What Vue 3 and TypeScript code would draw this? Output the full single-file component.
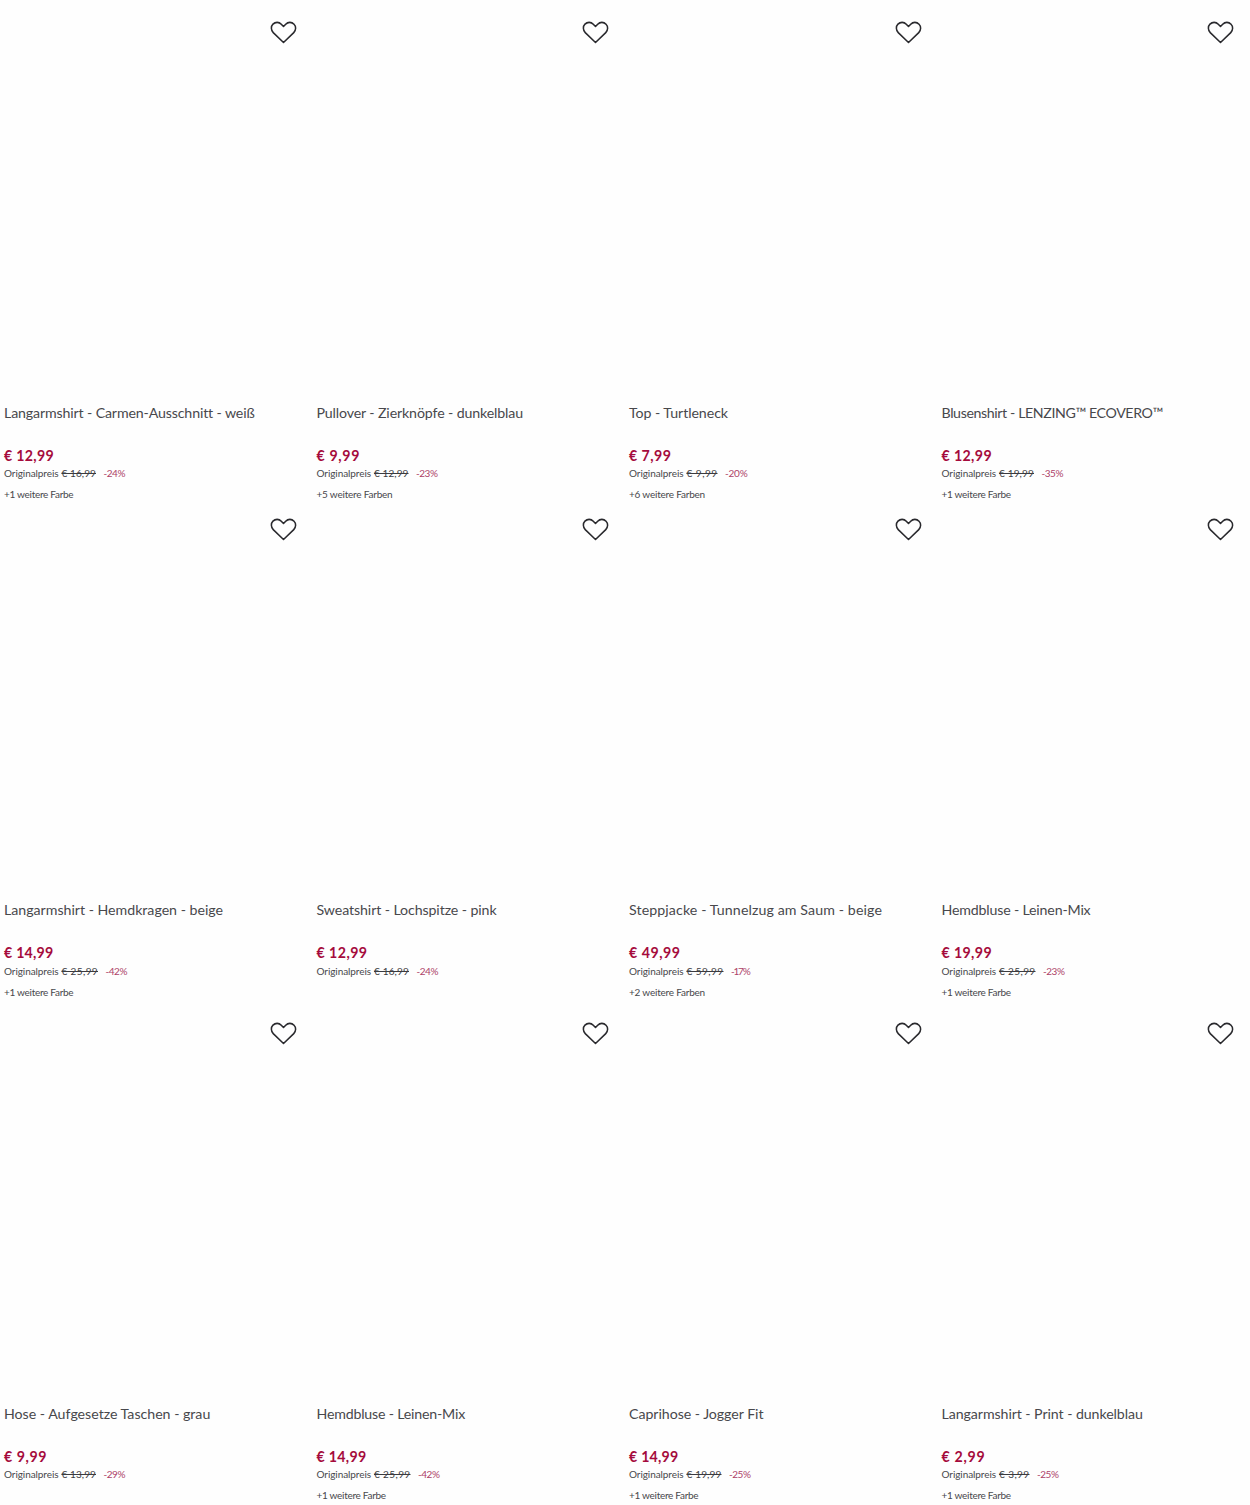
<script setup lang="ts">
interface Product {
  title: string
  titleWidth: number
  price: string
  priceWidth: number
  original: string
  originalWidth: number
  discount: string
  discountWidth: number
  colors?: number
}

const product = (
  title: string, titleWidth: number,
  price: string, priceWidth: number,
  original: string, originalWidth: number,
  discount: string, discountWidth: number,
  colors?: number,
): Product => ({ title, titleWidth, price, priceWidth, original, originalWidth, discount, discountWidth, colors })

const rows: Product[][] = [
  [
    product('Langarmshirt - Carmen-Ausschnitt - weiß', 250, '12,99', 50, '16,99', 34.5, '24', 21.5, 1),
    product('Pullover - Zierknöpfe - dunkelblau', 206.5, '9,99', 43.5, '12,99', 34.5, '23', 21.5, 5),
    product('Top - Turtleneck', 99, '7,99', 42.5, '9,99', 31, '20', 22.5, 6),
    product('Blusenshirt - LENZING™ ECOVERO™', 221.3, '12,99', 50.5, '19,99', 35, '35', 21.5, 1),
  ],
  [
    product('Langarmshirt - Hemdkragen - beige', 219, '14,99', 49.5, '25,99', 36.5, '42', 21.5, 1),
    product('Sweatshirt - Lochspitze - pink', 180, '12,99', 51, '16,99', 35, '24', 21.5),
    product('Steppjacke - Tunnelzug am Saum - beige', 253, '49,99', 51.5, '59,99', 37, '17', 18.5, 2),
    product('Hemdbluse - Leinen-Mix', 149, '19,99', 50.5, '25,99', 36.5, '23', 21.5, 1),
  ],
  [
    product('Hose - Aufgesetze Taschen - grau', 206.3, '9,99', 43, '13,99', 34.5, '29', 21.5),
    product('Hemdbluse - Leinen-Mix', 148.5, '14,99', 50, '25,99', 36.5, '42', 21.5, 1),
    product('Caprihose - Jogger Fit', 134.5, '14,99', 49.5, '19,99', 35, '25', 21.5, 1),
    product('Langarmshirt - Print - dunkelblau', 201.3, '2,99', 44, '3,99', 30.5, '25', 21.5, 1),
  ],
]

// Tracks a line of text so that it fills the given width.
const vFit = {
  mounted(el: HTMLElement, binding: { value: number }) {
    const count = (el.textContent ?? '').length
    const natural = el.getBoundingClientRect().width
    el.style.letterSpacing = `${(binding.value - natural) / count}px`
  },
}
</script>

<template>
  <main class="listing">
    <section v-for="(row, r) in rows" :key="r" class="row">
      <article v-for="(item, i) in row" :key="i" class="card">
        <div class="media">
          <button class="wish" type="button" aria-label="Merken">
            <svg width="27" height="23" viewBox="0 0 28 24" fill="none">
              <path d="M14 22.5 3.3 12.1C.8 9.6.7 5.6 3 3.3c2.4-2.5 6.3-2.5 8.7 0L14 5.7l2.3-2.4c2.4-2.5 6.3-2.5 8.7 0 2.3 2.3 2.2 6.3-.3 8.8Z" stroke="#29292d" stroke-width="1.6" stroke-linejoin="round" />
            </svg>
          </button>
        </div>
        <h2 class="title"><span v-fit="item.titleWidth">{{ item.title }}</span></h2>
        <div class="price"><span v-fit="item.priceWidth">€ {{ item.price }}</span></div>
        <div class="original">
          <span v-fit="54.5">Originalpreis</span>
          <s v-fit="item.originalWidth">€ {{ item.original }}</s>
          <span v-fit="item.discountWidth" class="discount">-{{ item.discount }}%</span>
        </div>
        <div v-if="item.colors" class="colors">
          <span v-fit="item.colors > 1 ? 76 : 69.3">+{{ item.colors }} weitere {{ item.colors > 1 ? 'Farben' : 'Farbe' }}</span>
        </div>
      </article>
    </section>
  </main>
</template>

<style>
body {
  background: #fefefe;
  overflow: hidden;
}
</style>

<style scoped>
.listing {
  height: 1505px;
  overflow: hidden;
  font-family: Lato, "Open Sans", sans-serif;
  color: #48484c;
}
.row {
  display: grid;
  grid-template-columns: repeat(4, 1fr);
  height: 497.5px;
}
.row:nth-child(2) {
  height: 503.5px;
}
.card {
  padding-left: 4px;
  white-space: nowrap;
}
.media {
  display: flex;
  justify-content: flex-end;
  height: 402.5px;
}
.wish {
  width: 27px;
  height: 23px;
  margin: 20.7px 15.8px 0 0;
  padding: 0;
  border: 0;
  background: none;
}
.wish svg {
  display: block;
}
.title span,
.price span,
.original span,
.original s,
.colors span {
  display: inline-block;
}
.title {
  height: 43px;
  margin: 0;
  font-size: 14.2px;
  font-weight: 400;
  line-height: 20px;
}
.price {
  height: 20px;
  font-size: 14.2px;
  font-weight: 700;
  line-height: 20px;
  color: #a50b3c;
}
.original {
  display: flex;
  height: 18px;
  padding-top: 0.5px;
  font-size: 10px;
  line-height: 14px;
}
.original s {
  margin-left: 3px;
  color: #3b3b3f;
}
.original .discount {
  margin-left: 7.5px;
  color: #ad4268;
}
.colors {
  padding-top: 0.2px;
  font-size: 10px;
  line-height: 20px;
}
</style>
